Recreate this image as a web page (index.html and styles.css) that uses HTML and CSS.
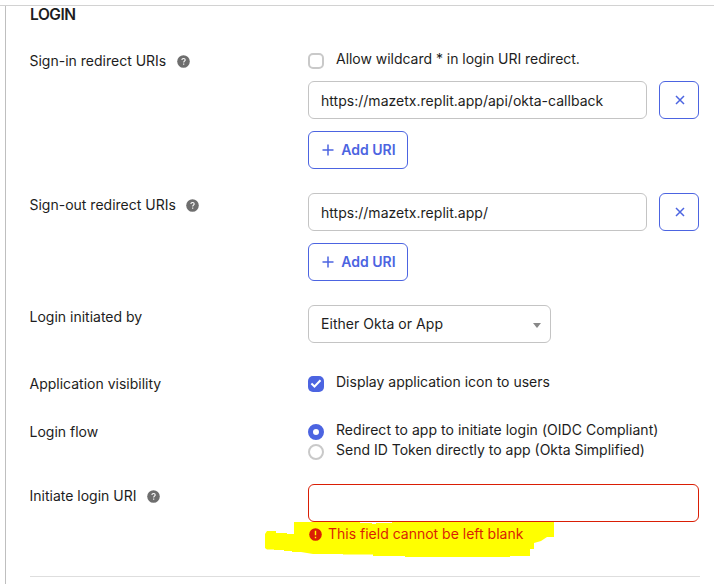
FILE: index.html
```html
<!DOCTYPE html>
<html lang="en">
<head>
<meta charset="utf-8">
<title>Login settings</title>
<link rel="stylesheet" href="styles.css">
</head>
<body>
<svg width="0" height="0" class="defs">
  <symbol id="help" viewBox="0 0 13 13"><circle cx="6.5" cy="6.5" r="6.3" fill="#6e6e6e"/><path d="M4.9 5.1C4.9 4.1 5.6 3.5 6.5 3.5s1.7.6 1.7 1.500c0 1.200-1.500 1.200-1.500 2.500M6.700 8.500v1.200" fill="none" stroke="#fff" stroke-width="1.1"/></symbol>
  <symbol id="plus" viewBox="0 0 12 12"><path d="M6 .5v11M.5 6h11" fill="none" stroke="#4c64e1" stroke-width="1.5"/></symbol>
  <symbol id="cross" viewBox="0 0 10 10"><path d="M1 1l8 8M9 1L1 9" fill="none" stroke="#4c64e1" stroke-width="1.5"/></symbol>
</svg>
<main class="page">
  <section class="panel">
    <h2>LOGIN</h2>
    <div class="row">
      <div class="label">Sign-in redirect URIs <svg class="help"><use href="#help"/></svg></div>
      <div class="control">
        <label class="option first"><span class="box"></span>Allow wildcard * in login URI redirect.</label>
        <div class="uri"><div class="field">https://mazetx.replit.app/api/okta-callback</div><button class="remove" aria-label="Remove"><svg><use href="#cross"/></svg></button></div>
        <button class="add"><svg><use href="#plus"/></svg>Add URI</button>
      </div>
    </div>
    <div class="row">
      <div class="label">Sign-out redirect URIs <svg class="help"><use href="#help"/></svg></div>
      <div class="control">
        <div class="uri"><div class="field">https://mazetx.replit.app/</div><button class="remove" aria-label="Remove"><svg><use href="#cross"/></svg></button></div>
        <button class="add"><svg><use href="#plus"/></svg>Add URI</button>
      </div>
    </div>
    <div class="row initiated">
      <div class="label">Login initiated by</div>
      <div class="control"><div class="field select">Either Okta or App<span class="arrow"></span></div></div>
    </div>
    <div class="row">
      <div class="label">Application visibility</div>
      <div class="control"><label class="option"><span class="box checked"><svg viewBox="0 0 16 16"><path d="M3.4 7.500l3.100 3 6-6.200" fill="none" stroke="#fff" stroke-width="2"/></svg></span>Display application icon to users</label></div>
    </div>
    <div class="row">
      <div class="label">Login flow</div>
      <div class="control">
        <label class="option oidc"><span class="radio selected"></span>Redirect to app to initiate login (OIDC Compliant)</label>
        <label class="option"><span class="radio"></span>Send ID Token directly to app (Okta Simplified)</label>
      </div>
    </div>
    <div class="row last">
      <div class="label">Initiate login URI <svg class="help"><use href="#help"/></svg></div>
      <div class="control">
        <div class="field invalid"></div>
        <div class="error">
          <svg class="marker" viewBox="0 0 289 35"><path d="M29 0H95V1H107V2H111V1H127V0H289V15H282L276 19L269 21V27H265V34H245V35H140V34H108V32.500H78V32H48L36 30H27V29H19V28H9V27.500H2L0 26V12L2 9H11V11H22V12H29Z" fill="#ff0"/></svg>
          <svg class="alert" viewBox="0 0 13 13"><circle cx="6.500" cy="6.500" r="6.300" fill="#da1e05"/><path d="M6.500 2.800v4.500M6.500 8.700v1.500" stroke="#ff0" stroke-width="1.400"/></svg>
          <span>This field cannot be left blank</span>
        </div>
      </div>
    </div>
  </section>
</main>
</body>
</html>
```
FILE: styles.css
```css
* { box-sizing: border-box; }
body { margin: 0; background: #fff; color: #1d1d21; font: 14px/20px Inter, sans-serif; }
.defs { position: absolute; }
.page { height: 579px; margin-top: 5px; padding-left: 5px; overflow: hidden; border-top: 1px solid #d2d2d2; }
.panel { height: 578px; padding: 0 14px 0 24px; border-left: 1px solid #bfbfbf; }
h2 { margin: 0 0 24px; height: 19px; font-size: 15.5px; line-height: 17px; font-weight: 600; letter-spacing: -0.45px; }
.row { display: grid; grid-template-columns: 278px 391px; margin-bottom: 24px; }
.label { display: flex; align-items: center; height: 24px; margin-left: -0.5px; }
.help { width: 13px; height: 13px; margin-left: 10.5px; }
.option { display: flex; height: 20px; gap: 12px; }
.option.first { margin-bottom: 12px; letter-spacing: -0.03px; }
.oidc { letter-spacing: 0.04px; }
.box, .radio { flex: none; width: 16px; height: 16px; margin-top: 4px; border: 2px solid #c9c9c9; border-radius: 5px; }
.checked { border: 0; background: #4c64e1; }
.checked svg { display: block; }
.radio { border-radius: 50%; }
.selected { border: 5px solid #4c64e1; }
.uri { display: flex; gap: 12px; margin-bottom: 12px; }
.field { flex: 1; display: flex; align-items: center; height: 38px; padding: 2px 12px 0; border: 1px solid #c4c4c4; border-radius: 6px; letter-spacing: 0.02px; }
button { display: flex; align-items: center; justify-content: center; padding: 0; height: 38px; color: #4c64e1; background: #fff; border: 1px solid #4c64e1; border-radius: 6px; font: 600 14px/20px Inter, sans-serif; }
.remove { width: 40px; padding-left: 1px; }
.remove svg { width: 10px; height: 10px; }
.add { width: 100px; gap: 7px; padding-left: 2px; }
.add svg { width: 12px; height: 12px; }
.initiated { margin-bottom: 29px; }
.select { width: 243px; justify-content: space-between; padding-top: 0; padding-right: 9px; letter-spacing: 0.04px; }
.arrow { margin-top: 2px; border: 4px solid transparent; border-top: 5px solid #888; border-bottom: 0; }
.invalid { border-color: #da1e05; }
.error { position: relative; display: flex; align-items: center; height: 24px; gap: 6px; padding-left: 1px; color: #da1e05; }
.error span { position: relative; }
.alert { position: relative; width: 13px; height: 13px; }
.marker { position: absolute; left: -43px; top: 0; width: 289px; height: 35px; }
.last { width: 670px; height: 93px; margin: 0; border-bottom: 1px solid #dedede; }
```
